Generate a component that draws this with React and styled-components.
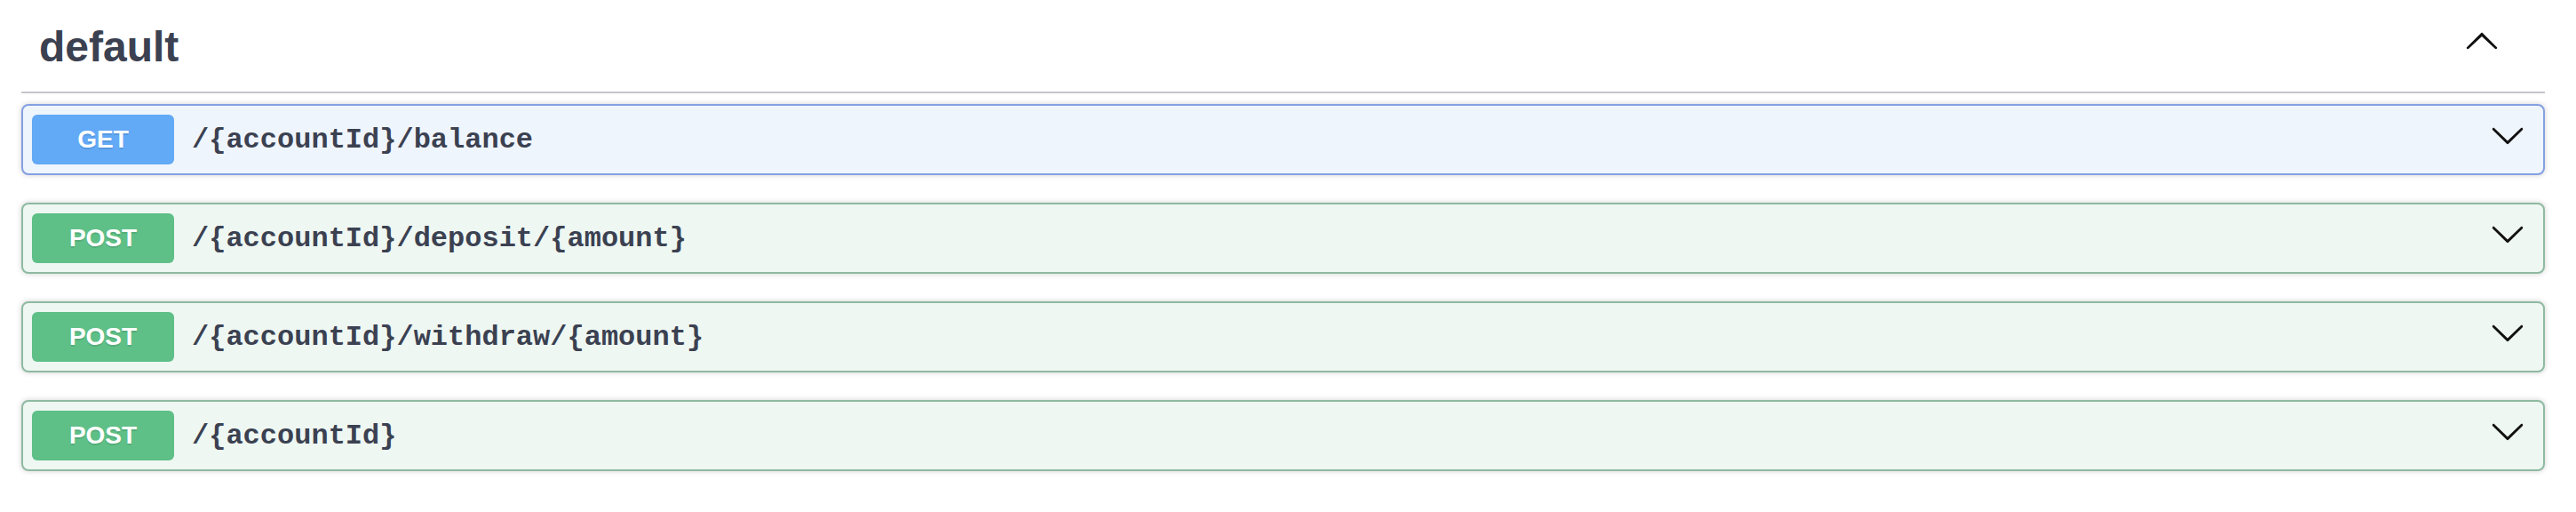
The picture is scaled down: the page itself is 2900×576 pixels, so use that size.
import React from 'react';
import styled, { createGlobalStyle } from 'styled-components';

const GlobalStyle = createGlobalStyle`
  body {
    margin: 0;
    background: #fff;
  }
`;

const ops = [
  { method: 'GET', path: '/{accountId}/balance' },
  { method: 'POST', path: '/{accountId}/deposit/{amount}' },
  { method: 'POST', path: '/{accountId}/withdraw/{amount}' },
  { method: 'POST', path: '/{accountId}' },
];

const palette = {
  GET: { badge: '#62a9f6', bg: '#eff5fd', border: '#84a0e2' },
  POST: { badge: '#5ebf87', bg: '#eef7f2', border: '#8fbaa2' },
};

const Wrapper = styled.div`
  padding: 0 35px 20px 24px;
  font-family: 'Liberation Sans', Arial, sans-serif;
  color: #3b4151;
`;

const TagHeader = styled.h3`
  display: flex;
  align-items: flex-start;
  margin: 0 0 12px;
  padding: 25px 51px 23px 20px;
  border-bottom: 2px solid rgba(59, 65, 81, 0.3);
`;

const TagTitle = styled.span`
  flex: 1;
  font-size: 48px;
  line-height: 55px;
  font-weight: 700;
`;

const ArrowButton = styled.button`
  border: none;
  background: none;
  padding: 0;
  margin: 0;
  display: flex;
  cursor: pointer;

  svg {
    display: block;
    fill: #111;
  }
`;

const Block = styled.div`
  margin: 0 0 31px;
  border: 2px solid ${(p) => palette[p.method].border};
  background: ${(p) => palette[p.method].bg};
  border-radius: 8px;
  box-shadow: 0 0 6px rgba(0, 0, 0, 0.19);
`;

const Summary = styled.div`
  display: flex;
  align-items: center;
  padding: 10px 20px 10px 10px;
`;

const Method = styled.span`
  min-width: 160px;
  padding: 12px 0;
  border-radius: 6px;
  background: ${(p) => palette[p.method].badge};
  color: #fff;
  text-align: center;
  font-size: 28px;
  line-height: 32px;
  font-weight: 700;
  text-shadow: 0 2px 0 rgba(0, 0, 0, 0.1);
`;

const Path = styled.span`
  flex: 1;
  padding: 0 20px;
  font-family: 'Liberation Mono', 'Courier New', monospace;
  font-size: 32px;
  font-weight: 700;
  color: #3b4151;
`;

const RowArrow = styled(ArrowButton)`
  margin-bottom: 10px;
`;

function ArrowUp() {
  return (
    <svg width="40" height="40" viewBox="0 0 20 20">
      <path d="M17.418 14.908c.271.268.708.268.979 0s.271-.701 0-.969l-7.908-7.83c-.27-.268-.707-.268-.979 0l-7.908 7.83c-.27.268-.27.701 0 .969.271.268.709.268.978 0L10 8l7.418 6.908z" />
    </svg>
  );
}

function ArrowDown() {
  return (
    <svg width="40" height="40" viewBox="0 0 20 20">
      <path d="M17.418 6.109c.272-.268.709-.268.979 0s.271.701 0 .969l-7.908 7.83c-.27.268-.707.268-.979 0l-7.908-7.83c-.27-.268-.27-.701 0-.969.271-.268.709-.268.979 0L10 13.25l7.418-7.141z" />
    </svg>
  );
}

function Operation({ method, path }) {
  return (
    <Block method={method}>
      <Summary>
        <Method method={method}>{method}</Method>
        <Path>{path}</Path>
        <RowArrow aria-label="expand">
          <ArrowDown />
        </RowArrow>
      </Summary>
    </Block>
  );
}

export default function App() {
  return (
    <Wrapper>
      <GlobalStyle />
      <TagHeader>
        <TagTitle>default</TagTitle>
        <ArrowButton aria-label="collapse">
          <ArrowUp />
        </ArrowButton>
      </TagHeader>
      {ops.map((op) => (
        <Operation key={op.path + op.method} {...op} />
      ))}
    </Wrapper>
  );
}
